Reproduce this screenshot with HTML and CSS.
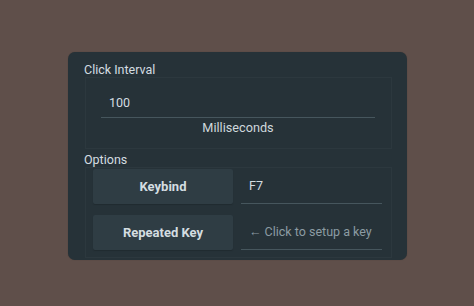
FILE: index.html
```html
<!DOCTYPE html>
<html>
<head>
<meta charset="utf-8">
<link rel="stylesheet" href="styles.css">
</head>
<body>
<div class="panel">
  <div class="label">Click Interval</div>
  <div class="group group-interval">
    <div class="field interval-field">100</div>
    <div class="unit">Milliseconds</div>
  </div>
  <div class="label label-options">Options</div>
  <div class="group group-options">
    <div class="btn">Keybind</div>
    <div class="field key-field">F7</div>
    <div class="btn">Repeated Key</div>
    <div class="field key-field placeholder">← Click to setup a key</div>
  </div>
</div>
</body>
</html>
```
FILE: styles.css
```css
html, body {
  margin: 0;
  padding: 0;
}
body {
  background: #5f4f4a;
  width: 474px;
  height: 306px;
  padding-top: 52px;
  box-sizing: border-box;
  font-family: Roboto, "Noto Sans", sans-serif;
  color: #cfd8dc;
}
.panel {
  margin-left: 68px;
  width: 339px;
  height: 208px;
  box-sizing: border-box;
  background: #263238;
  border-radius: 7px;
  padding: 10px 15px 0 16px;
  box-shadow: 0 0 1px rgba(0,0,0,0.3);
}
.label {
  font-size: 12.5px;
  line-height: 15px;
  height: 15px;
  color: #d4dde1;
}
.label-options {
  margin-top: 3px;
}
.group {
  margin-left: 1px;
  border: 1px solid rgba(255,255,255,0.03);
  box-sizing: border-box;
}
.group-interval {
  height: 72px;
  padding: 11px 16px 0 15px;
}
.field {
  font-size: 12.5px;
  color: #d4dde1;
  border-bottom: 1px solid #46565d;
  padding-left: 8px;
}
.interval-field {
  height: 28px;
  line-height: 28px;
}
.unit {
  text-align: center;
  font-size: 12.7px;
  line-height: 20px;
  color: #cfd8dc;
}
.group-options {
  height: 91px;
  padding: 1px 10px 0 7px;
  display: grid;
  grid-template-columns: 140px 141px;
  column-gap: 8px;
  row-gap: 11px;
  align-content: start;
}
.btn {
  height: 35px;
  line-height: 35px;
  text-align: center;
  background: #2f3d44;
  font-weight: bold;
  font-size: 13px;
  color: #d4dde1;
  border-radius: 2px;
  box-shadow: 0 1px 1px rgba(0,0,0,0.15);
}
.key-field {
  height: 34px;
  line-height: 34px;
}
.placeholder {
  color: #8c9ca3;
}
```
